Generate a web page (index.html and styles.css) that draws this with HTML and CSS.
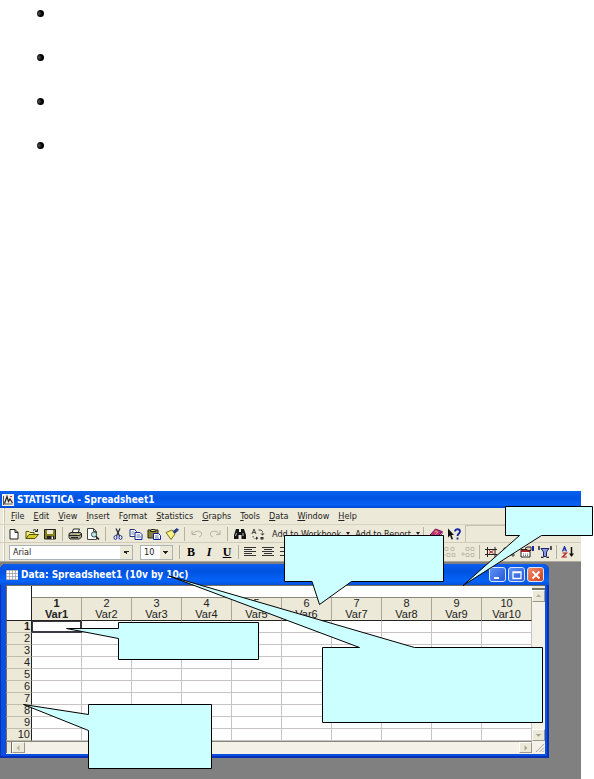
FILE: index.html
```html
<!DOCTYPE html>
<html lang="en">
<head>
<meta charset="utf-8">
<title>STATISTICA - Spreadsheet1</title>
<link rel="stylesheet" href="styles.css">
</head>
<body>
<ul class="bullets"><li></li><li></li><li></li><li></li></ul>

<main class="app">
  <header class="app-title">
    <svg class="app-logo" viewBox="0 0 12 12"><rect width="12" height="12" fill="#f4efe6"/><path d="M1.5 11V2M1.5 10h9" stroke="#555" fill="none"/><path d="M2.5 9.500 5 2.500l1.500 5 1.500-2.500 2.500 4" stroke="#222" fill="none" stroke-width="1.200"/><path d="M8 2.500h2" stroke="#c22"/></svg>
    <h1>STATISTICA - Spreadsheet1</h1>
  </header>

  <nav class="menu">
    <a href="#"><u>F</u>ile</a><a href="#"><u>E</u>dit</a><a href="#"><u>V</u>iew</a><a href="#"><u>I</u>nsert</a><a href="#">F<u>o</u>rmat</a><a href="#"><u>S</u>tatistics</a><a href="#"><u>G</u>raphs</a><a href="#"><u>T</u>ools</a><a href="#"><u>D</u>ata</a><a href="#"><u>W</u>indow</a><a href="#"><u>H</u>elp</a>
  </nav>

  <div class="toolbar">
    <button aria-label="New"><svg viewBox="0 0 14 12"><path d="M3 1.500h5l3 3v6.500H3zM8 1.500v3h3" fill="#fff" stroke="#222"/></svg></button>
    <button aria-label="Open"><svg viewBox="0 0 14 12"><path d="M1 10.500V3.500h3l1 1h4v2" fill="#f5ee7a" stroke="#55520c"/><path d="M1 10.500 4 6.500h9.500l-3.500 4z" fill="#d6cc22" stroke="#55520c"/><path d="M8 2.500c1.500-1.500 3-1 3.500.5M12.500 1v2.500H10" stroke="#222" fill="none"/></svg></button>
    <button aria-label="Save"><svg viewBox="0 0 14 12"><path d="M1.500 1.500h11v9.500h-11z" fill="#858018" stroke="#222"/><path d="M4 2h6v4H4z" fill="#eceada"/><path d="M4 8h7v3H4z" fill="#222"/><path d="M8.500 8.500h1.500V11H8.500z" fill="#eee"/></svg></button>
    <span class="sep"></span>
    <button aria-label="Print"><svg viewBox="0 0 14 12"><path d="M4 5 5.500 1h6L10 5z" fill="#fff" stroke="#222"/><path d="M1 5.500 3 4.500h9l1.500 1V9l-2 2H2L1 9.500z" fill="#aaa890" stroke="#222"/><path d="M1 7.500h10.500l2-1.500M3 9.500h7" stroke="#222" fill="none"/><path d="M9 6.500h2" stroke="#dd2"/></svg></button>
    <button aria-label="Print preview"><svg viewBox="0 0 14 12"><path d="M1.500.5h6l3 3v8h-9zM7.500.5v3h3" fill="#fff" stroke="#444"/><circle cx="8" cy="6.500" r="2.600" fill="#bfe4e4" stroke="#355"/><path d="m10 8.500 3 3" stroke="#222" stroke-width="1.600"/></svg></button>
    <span class="sep"></span>
    <button aria-label="Cut"><svg viewBox="0 0 14 12"><path d="M5 .5 8.500 8M9 .5 5.500 8" stroke="#223" fill="none" stroke-width="1.200"/><ellipse cx="4.500" cy="9.500" rx="1.500" ry="2" fill="none" stroke="#1a2fae"/><ellipse cx="9.500" cy="9.500" rx="1.500" ry="2" fill="none" stroke="#1a2fae"/></svg></button>
    <button aria-label="Copy"><svg viewBox="0 0 14 12"><path d="M1 1.500h4.500l2 2v5H1z" fill="#fff" stroke="#237"/><path d="M2.500 4h3M2.500 6h3" stroke="#68a"/><path d="M6 4.500h5l2 2v5H6z" fill="#fff" stroke="#12229c"/><path d="M7.500 7H11M7.500 9H12" stroke="#57a"/></svg></button>
    <button aria-label="Paste"><svg viewBox="0 0 14 12"><path d="M1 2h10v8H1z" fill="#8b8531" stroke="#222"/><path d="M3.500 3.500v-1l1.500-1h2l1.500 1v1z" fill="#efe560" stroke="#222"/><path d="M6.500 5.500h5l2 2v4h-7z" fill="#fff" stroke="#12229c"/><path d="M8 8h3.500M8 10h4" stroke="#57a"/></svg></button>
    <button aria-label="Format painter"><svg viewBox="0 0 14 12"><path d="M1 4.500 7 2l3 4-4 5.500z" fill="#f6f08a" stroke="#77731c"/><path d="m8 3.500 4-3 1.500 1.500L10 5z" fill="#345" stroke="#223a9a"/></svg></button>
    <span class="sep"></span>
    <button aria-label="Undo" disabled><svg viewBox="0 0 14 12"><path d="M2 2.500v4h4M2.500 6C5 2.500 10 2.500 11.500 5c.8 2-1 3.500-2.500 4" fill="none" stroke="#b4b1a0"/></svg></button>
    <button aria-label="Redo" disabled><svg viewBox="0 0 14 12"><path d="M12 2.500v4H8M11.500 6C9 2.500 4 2.500 2.500 5c-.8 2 1 3.500 2.500 4" fill="none" stroke="#b4b1a0"/></svg></button>
    <span class="sep"></span>
    <button aria-label="Find"><svg viewBox="0 0 14 12"><path d="M3 1h3v3h2V1h3l2 6v4H8.500V7h-3v4H1V7z" fill="#151515"/><path d="M3.500 5 2.500 8M10 5v3" stroke="#bbb"/></svg></button>
    <button aria-label="Replace"><svg viewBox="0 0 14 12"><path d="m1 6 2-5 2 5M2 4.500h2M7.500 2h2.500l1.500 1.500v1" fill="none" stroke="#444"/><path d="M2 8c0 2 1 2.500 3 2.500" stroke="#444" fill="none" stroke-dasharray="1 1"/><path d="M9.500 5.500h4l-2 2zM5 8.500 7.500 10 5 12zM9.500 8v3.500h3V9h-3" fill="#333"/></svg></button>
    <button class="wide">Add to Workbook<i class="caret"></i></button>
    <button class="wide">Add to Report<i class="caret"></i></button>
    <span class="sep"></span>
    <button aria-label="Contents"><svg viewBox="0 0 14 12"><path d="M1 7 6.500 1 13 3.500 8 10z" fill="#c12a86" stroke="#70104e"/><path d="m1 7 .5 2L8 11.500l5-6v-2L8 10z" fill="#fff" stroke="#70104e"/><path d="M5.500 4c2-2 4 0 2 1.500l-1 1" fill="none" stroke="#ffd94d"/></svg></button>
    <button aria-label="Help pointer"><svg viewBox="0 0 14 12"><path d="M1 .5v9l2-2 1.500 4L6 11 4.500 7H7z" fill="#111"/><path d="M8 3.500C8 .5 13 .5 13 3.500c0 2-2.500 2-2.500 4.500M10.500 9.500v2" fill="none" stroke="#1726a8" stroke-width="1.800"/></svg></button>
    <span class="empty-bar"></span>
  </div>

  <div class="toolbar format">
    <select class="font-name" aria-label="Font"><option>Arial</option></select>
    <select class="font-size" aria-label="Font size"><option>10</option></select>
    <span class="sep"></span>
    <button class="glyph"><b>B</b></button>
    <button class="glyph"><em>I</em></button>
    <button class="glyph"><u>U</u></button>
    <span class="sep"></span>
    <button aria-label="Align left"><svg viewBox="0 0 14 12"><path d="M1 1.500h12M1 3.500h8M1 5.500h12M1 7.500h8M1 9.500h12" stroke="#333"/></svg></button>
    <button aria-label="Align center"><svg viewBox="0 0 14 12"><path d="M1 1.500h12M3 3.500h8M1 5.500h12M3 7.500h8M1 9.500h12" stroke="#333"/></svg></button>
    <button aria-label="Align right"><svg viewBox="0 0 14 12"><path d="M1 1.500h12M5 3.500h8M1 5.500h12M5 7.500h8M1 9.500h12" stroke="#333"/></svg></button>
    <span class="push"></span>
    <button aria-label="Increase decimals" disabled><svg viewBox="0 0 14 12"><path d="M2 1.500h3v3H2zM8 1.500h3v3H8zM4 7.500h3v3H4zM9 7.500h3v3H9zM0 9h3" fill="none" stroke="#c0bdac"/></svg></button>
    <button aria-label="Decrease decimals" disabled><svg viewBox="0 0 14 12"><path d="M5 1.500h3v3H5zM10 1.500h3v3h-3zM5 7.500h3v3H5zM10 7.500h3v3h-3zM0 8h4M2 6v4" fill="none" stroke="#c0bdac"/></svg></button>
    <span class="sep"></span>
    <button aria-label="Variables"><svg viewBox="0 0 14 12"><path d="M3.500 1v10M11 1v10M1 3.500h12M1 8.500h12" stroke="#222" fill="none"/><path d="m5 4.500 4.500 3M9.500 4.500l-4.500 3" stroke="#b22"/></svg></button>
    <button aria-label="Cases"><svg viewBox="0 0 14 12"><path d="M3 1v10M11 1v10M1 3h12M1 9h12" stroke="#444" fill="none"/></svg></button>
    <button aria-label="Variable specs"><svg viewBox="0 0 14 12"><path d="M1 3.500h9v7.500H1z" fill="#fff" stroke="#222"/><path d="M1 5h9" stroke="#a22" stroke-width="2"/><path d="M3 8h5M3 9.500h5" stroke="#777" stroke-dasharray="1 1"/><path d="M5 2.500 7 1h4v3.500H8z" fill="#eec9b0" stroke="#222"/><path d="M12 0h2v5h-2z" fill="#1726a8"/></svg></button>
    <button aria-label="Select cases"><svg viewBox="0 0 14 12"><path d="M3 2.500h8L8.500 6v4.500h-3V6z" fill="#8b98e0" stroke="#1b2470"/><path d="M1 0v4M13 0v4M3 11.500h2.500M8.500 11.500H11" stroke="#222" stroke-width="1.500"/></svg></button>
    <span class="sep"></span>
    <button aria-label="Sort ascending"><svg viewBox="0 0 14 12"><path d="m1.500 5.500 2-5 2 5M2.500 4h2.500" stroke="#1f2fae" fill="none" stroke-width="1.200"/><path d="M1.500 7h4l-4 4h4.500" stroke="#b01c1c" fill="none" stroke-width="1.200"/><path d="M10.500 1v8" stroke="#111" stroke-width="1.500"/><path d="M8 7.500h5l-2.500 3.500z" fill="#111"/></svg></button>
  </div>

  <section class="workspace">
    <article class="window">
      <header class="window-title">
        <svg class="sheet-logo" viewBox="0 0 12 10"><path d="M0 0h12v10H0z" fill="#fff"/><path d="M0 .5h12M0 3.500h12M0 6.500h12M0 9.500h12M.5 0v10M3.500 0v10M6.500 0v10M9.500 0v10" stroke="#889" stroke-width=".6"/></svg>
        <h2>Data: Spreadsheet1 (10v by 10c)</h2>
        <button class="win-btn" aria-label="Minimize"><svg viewBox="0 0 14 12"><path d="M3 9h5" stroke="#fff" stroke-width="2"/></svg></button>
        <button class="win-btn" aria-label="Maximize"><svg viewBox="0 0 14 12"><path d="M3 3h8v6.500H3zM3 3.500h8" fill="none" stroke="#fff" stroke-width="1.300"/></svg></button>
        <button class="win-btn close" aria-label="Close"><svg viewBox="0 0 14 12"><path d="m3.500 2.500 7 7M10.500 2.500l-7 7" stroke="#fff" stroke-width="1.800"/></svg></button>
      </header>
      <div class="client">
        <table>
          <colgroup><col class="case-col"><col span="10"></colgroup>
          <thead>
            <tr><td class="corner" rowspan="2"></td><td class="info" colspan="10"></td></tr>
            <tr class="vars"><th class="active">1<br>Var1</th><th>2<br>Var2</th><th>3<br>Var3</th><th>4<br>Var4</th><th>5<br>Var5</th><th>6<br>Var6</th><th>7<br>Var7</th><th>8<br>Var8</th><th>9<br>Var9</th><th>10<br>Var10</th></tr>
          </thead>
          <tbody>
            <tr><th class="active">1</th><td class="cursor"></td><td></td><td></td><td></td><td></td><td></td><td></td><td></td><td></td><td></td></tr>
            <tr><th>2</th><td></td><td></td><td></td><td></td><td></td><td></td><td></td><td></td><td></td><td></td></tr>
            <tr><th>3</th><td></td><td></td><td></td><td></td><td></td><td></td><td></td><td></td><td></td><td></td></tr>
            <tr><th>4</th><td></td><td></td><td></td><td></td><td></td><td></td><td></td><td></td><td></td><td></td></tr>
            <tr><th>5</th><td></td><td></td><td></td><td></td><td></td><td></td><td></td><td></td><td></td><td></td></tr>
            <tr><th>6</th><td></td><td></td><td></td><td></td><td></td><td></td><td></td><td></td><td></td><td></td></tr>
            <tr><th>7</th><td></td><td></td><td></td><td></td><td></td><td></td><td></td><td></td><td></td><td></td></tr>
            <tr><th>8</th><td></td><td></td><td></td><td></td><td></td><td></td><td></td><td></td><td></td><td></td></tr>
            <tr><th>9</th><td></td><td></td><td></td><td></td><td></td><td></td><td></td><td></td><td></td><td></td></tr>
            <tr><th>10</th><td></td><td></td><td></td><td></td><td></td><td></td><td></td><td></td><td></td><td></td></tr>
          </tbody>
        </table>
        <div class="vscroll">
          <span class="split"></span>
          <button class="arrow" aria-label="Scroll up"><svg viewBox="0 0 12 10"><path d="m3 6 3-3 3 3z" fill="#b5b2a2"/></svg></button>
          <span class="track"></span>
          <button class="arrow" aria-label="Scroll down"><svg viewBox="0 0 12 10"><path d="m3 4 3 3 3-3z" fill="#a5a292"/></svg></button>
        </div>
        <div class="hscroll">
          <span class="vsplit"></span>
          <button class="arrow" aria-label="Scroll left"><svg viewBox="0 0 12 10"><path d="M7 2 4 5l3 3z" fill="#b5b2a2"/></svg></button>
          <span class="track"></span>
          <button class="arrow" aria-label="Scroll right"><svg viewBox="0 0 12 10"><path d="m5 2 3 3-3 3z" fill="#a5a292"/></svg></button>
        </div>
        <svg class="grip" viewBox="0 0 13 12"><path d="m4 11 8-8M7.500 11 12 6.500M10.500 11 12 9.500" stroke="#aaa797"/></svg>
      </div>
    </article>
  </section>

  <svg class="callouts" viewBox="0 491 594 288">
    <path d="M505.500 506.500h87v29h-51L463 585.500l56.500-50h-14z"/>
    <path d="M284.500 535.500h159v46h-92l-32 23-7.500-23h-27.500z"/>
    <path d="M118.500 622.500h140v37h-140v-21l-52-10h52z"/>
    <path d="M322.500 647.500h37L169 576l245.500 71.500h128v75h-220z"/>
    <path d="M88.500 704.500h123v64h-123v-38L23.500 704.500l65 10z"/>
  </svg>
</main>
</body>
</html>
```
FILE: styles.css
```css
* { box-sizing: border-box; }

body {
  margin: 0;
  min-height: 100vh;
  display: flex;
  flex-direction: column;
  justify-content: space-between;
  background: #fff;
  font-family: "DejaVu Sans Condensed", "DejaVu Sans", sans-serif;
  font-size: 9px;
  color: #222;
}

h1, h2 { margin: 0; font-size: 10px; color: #fff; line-height: 16px; white-space: nowrap; }

button {
  margin: 0;
  padding: 0;
  border: 0;
  background: none;
  font: inherit;
  color: inherit;
}

.bullets { margin: 0; padding: 10px 37px; list-style: none; }
.bullets li { height: 44px; }
.bullets li::before {
  content: "";
  display: block;
  width: 7px;
  height: 7px;
  border-radius: 50%;
  background: radial-gradient(circle at 30% 50%, #555, #000 50%);
}

.app { position: relative; margin-right: 13px; background: #ece9d8; }

.app-title {
  display: flex;
  align-items: center;
  gap: 3px;
  height: 17px;
  padding-left: 2px;
  background: linear-gradient(#0a63f0, #0053e2 40%, #0562f6 80%, #0048cf);
}
.app-logo { width: 12px; height: 12px; }

.menu {
  display: flex;
  gap: 9px;
  height: 17px;
  padding-left: 11px;
  line-height: 17px;
  border-bottom: 1px solid #d8d4c2;
}
.menu a { color: inherit; text-decoration: none; }

.menu, .toolbar {
  background: linear-gradient(90deg, transparent 3px, #fff 3px 4px, #c9c5b2 4px 5px, transparent 5px);
}

.toolbar {
  display: flex;
  align-items: center;
  height: 18px;
  padding-left: 5px;
  border-bottom: 1px solid #d0ccb9;
}
.toolbar button {
  flex: none;
  display: flex;
  align-items: center;
  justify-content: center;
  width: 18px;
  height: 16px;
}
.toolbar svg { width: 14px; height: 12px; }
.toolbar .wide { width: auto; padding-left: 5px; gap: 5px; white-space: nowrap; }
.caret { border: 2px solid transparent; border-top: 3px solid #222; border-bottom: 0; }
.sep { flex: none; width: 1px; height: 14px; margin: 0 3px; background: #b5b2a0; }
.empty-bar { flex: 1; align-self: stretch; margin-left: 2px; border-left: 1px solid #c4c1ae; border-top: 1px solid #c4c1ae; }

.format { height: 19px; padding: 0 4px 0 9px; border-bottom-color: #aca899; }
.format .sep { margin: 0 2px; }
.format select {
  appearance: none;
  height: 15px;
  padding: 0 3px;
  border: 1px solid #a9b2b5;
  border-radius: 0;
  font: inherit;
  line-height: 12px;
  color: #222;
  background:
    linear-gradient(to bottom left, #222 50%, transparent 0) right 6px center / 3px 3px no-repeat,
    linear-gradient(to bottom right, #222 50%, transparent 0) right 3px center / 3px 3px no-repeat,
    linear-gradient(#ece9d8, #ece9d8) right / 12px 100% no-repeat,
    #fff;
}
.font-name { width: 124px; margin-right: 7px; }
.font-size { width: 33px; margin-right: 4px; }
.format .glyph { font: 700 12px "Liberation Serif", serif; color: #000; }
.push { flex: 1; }

.workspace { padding: 2px 32px 21px 0; background: #808080; }

.window {
  padding: 0 4px 4px 6px;
  border-radius: 6px 6px 0 0;
  background: #0a50e0;
  box-shadow: inset 1px 0 #0831b8, inset -2px 0 #0831b8, inset 0 -2px #0831b8;
}
.window-title {
  display: flex;
  align-items: center;
  gap: 2px;
  height: 21px;
  margin: 0 -4px 0 -6px;
  padding: 0 5px 0 6px;
  border-radius: 6px 6px 0 0;
  background: linear-gradient(#0a5df0, #0052e0 35%, #0563f8 80%, #0650d8);
}
.window-title h2 { flex: 1; padding-left: 1px; }
.sheet-logo { width: 12px; height: 10px; }
.win-btn {
  flex: none;
  display: flex;
  align-items: center;
  justify-content: center;
  width: 17px;
  height: 15px;
  border: 1px solid #dbe6fb;
  border-radius: 3px;
  background: linear-gradient(135deg, #5f92f4, #2459d8);
}
.win-btn svg { width: 14px; height: 12px; }
.win-btn.close { background: linear-gradient(135deg, #f0906e, #d43c14); }

.client {
  display: grid;
  grid-template-columns: 1fr 13px;
  grid-template-rows: auto 13px;
  background: #f3f1e8;
  border-top: 1px solid #716f64;
}

table {
  width: 100%;
  table-layout: fixed;
  border-collapse: separate;
  border-spacing: 0;
  background: #fff;
  font: 11px/11px "Liberation Sans", Arial, sans-serif;
}
.case-col { width: 26px; }
td, th { padding: 0; border: 0 solid #c8c4c4; font-weight: 400; }
.corner { border-right: 1px solid #222; border-bottom: 1px solid #222; border-left: 1px solid #716f64; }
.info { height: 12px; border-bottom: 1px solid #8a887c; }
.vars th { border-right: 1px solid #aaa797; border-bottom: 1px solid #222; background: #ece9d8; }
tbody th {
  border-right: 1px solid #222;
  border-bottom: 1px solid #c0bdac;
  border-left: 1px solid #716f64;
  padding-right: 1px;
  background: #ece9d8;
  text-align: right;
}
th.active { font-weight: 700; }
tbody td { border-right-width: 1px; border-bottom-width: 1px; }
tbody td.cursor { border: 1px solid #3c3840; border-width: 1px 2px 2px 1px; }

.vscroll, .hscroll { display: flex; }
.vscroll { flex-direction: column; }
.hscroll { border-top: 1px solid #8a887c; padding-bottom: 1px; }
.track { flex: 1; }
.split { height: 4px; background: #ece9d8; border-bottom: 2px solid #77756a; }
.vsplit { width: 6px; background: #ece9d8; border-left: 1px solid #716f64; border-right: 1px solid #716f64; }
.arrow {
  display: flex;
  align-items: center;
  justify-content: center;
  width: 13px;
  height: 12px;
  background: #ece9d8;
  border: 1px solid #fff;
  border-right-color: #9a9888;
  border-bottom-color: #9a9888;
}
.arrow svg { width: 12px; height: 10px; }
.hscroll .arrow { height: auto; }
.grip { width: 13px; height: 12px; }

.callouts { position: absolute; top: 0; left: 0; width: 594px; height: 288px; pointer-events: none; }
.callouts path { fill: #cff; stroke: #000; stroke-width: 1; }
```
